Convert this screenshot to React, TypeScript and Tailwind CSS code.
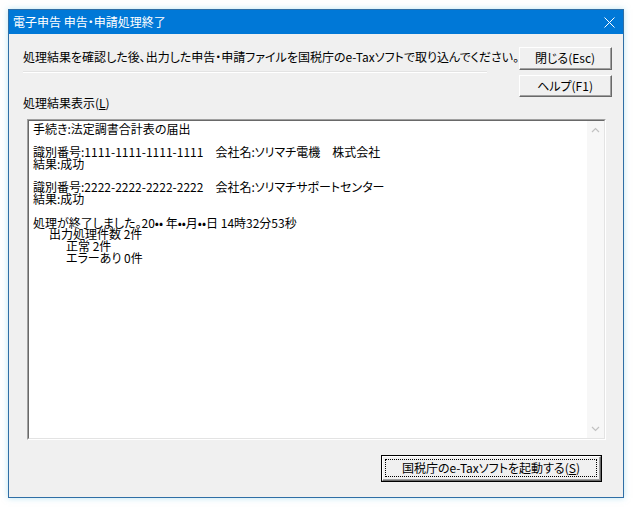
const FONT = '"Noto Sans CJK JP", "Noto Sans", sans-serif'

const LINES: { text: string; indent: number }[] = [
  { text: '手続き:法定調書合計表の届出', indent: 0 },
  { text: '', indent: 0 },
  { text: '識別番号:1111-1111-1111-1111\u3000会社名:ソリマチ電機\u3000株式会社', indent: 0 },
  { text: '結果:成功', indent: 0 },
  { text: '', indent: 0 },
  { text: '識別番号:2222-2222-2222-2222\u3000会社名:ソリマチサポートセンター', indent: 0 },
  { text: '結果:成功', indent: 0 },
  { text: '', indent: 0 },
  { text: '処理が終了しました。20•• 年••月••日 14時32分53秒', indent: 0 },
  { text: '出力処理件数 2件', indent: 16 },
  { text: '正常 2件', indent: 33 },
  { text: 'エラーあり 0件', indent: 33 },
]

function Btn({ children, className = '' }: { children: React.ReactNode; className?: string }) {
  return (
    <div
      className={`flex items-center justify-center border border-t-white border-l-white border-r-[#696969] border-b-[#696969] bg-[#f0f0f0] text-[12px] text-black ${className}`}
    >
      <div className="flex h-full w-full items-center justify-center border-r border-b border-[#a0a0a0]">{children}</div>
    </div>
  )
}

export default function App() {
  return (
    <div className="h-[508px] w-[633px] bg-white pt-[9px] pl-[8px]" style={{ fontFamily: FONT, fontFeatureSettings: '"palt"' }}>
      <div className="flex h-[489px] w-[616px] flex-col border border-[#2f6ea5] shadow-[0_0_6px_rgba(120,200,230,0.5)]">
        <div className="flex h-[24px] items-center justify-between bg-[#0078d7] pl-[4px] pr-[8px] text-[12px] text-white">
          <span>電子申告 申告・申請処理終了</span>
          <svg width="11" height="11" viewBox="0 0 11 11" className="mt-[1px]">
            <path d="M0.5 0.5 L10.5 10.5 M10.5 0.5 L0.5 10.5" stroke="white" strokeWidth="1" />
          </svg>
        </div>
        <div className="flex flex-1 flex-col bg-[#f0f0f0] pt-[13px] pr-[11px] pl-[14px] text-[12px] leading-[12px] text-black">
          <div className="flex items-start">
            <div className="flex-1">
              <div className="mt-[4px] whitespace-nowrap">処理結果を確認した後、出力した申告・申請ファイルを国税庁のe-Taxソフトで取り込んでください。</div>
              <div className="mt-[8px] w-[464px] border-t border-b border-t-[#e3e3e3] border-b-white" />
            </div>
            <div className="flex w-[94px] flex-col gap-[5px]">
              <Btn className="h-[23px]">閉じる(Esc)</Btn>
              <Btn className="h-[22px]">ヘルプ(F1)</Btn>
            </div>
          </div>
          <div>
            処理結果表示(<span className="underline">L</span>)
          </div>
          <div className="mt-[10px] mr-[6px] ml-[4px] flex h-[321px] border border-t-[#a0a0a0] border-l-[#a0a0a0] border-r-white border-b-white">
            <div className="flex flex-1 border border-t-[#696969] border-l-[#696969] border-r-[#e3e3e3] border-b-[#e3e3e3] bg-white">
              <div className="flex-1 pt-[2px] pl-[4px] leading-[11.7px]">
                {LINES.map((l, i) => (
                  <div key={i} className="h-[11.7px] whitespace-pre" style={{ paddingLeft: l.indent }}>
                    {l.text}
                  </div>
                ))}
              </div>
              <div className="flex w-[17px] flex-col items-center justify-between bg-[#f7f7f7] py-[6px] text-[#c8c8c8]">
                <svg width="9" height="6" viewBox="0 0 9 6">
                  <path d="M1 5 L4.5 1.5 L8 5" stroke="#c2c2c2" strokeWidth="1.2" fill="none" />
                </svg>
                <svg width="9" height="6" viewBox="0 0 9 6">
                  <path d="M1 1 L4.5 4.5 L8 1" stroke="#c2c2c2" strokeWidth="1.2" fill="none" />
                </svg>
              </div>
            </div>
          </div>
          <div className="mt-[15px] mr-[10px] flex justify-end">
            <div className="h-[27px] w-[221px] border border-black">
              <Btn className="h-full">
                <div className="flex h-[calc(100%-4px)] w-[calc(100%-4px)] items-center justify-center border border-dotted border-black">
                  国税庁のe-Taxソフトを起動する(<span className="underline">S</span>)
                </div>
              </Btn>
            </div>
          </div>
        </div>
      </div>
    </div>
  )
}
